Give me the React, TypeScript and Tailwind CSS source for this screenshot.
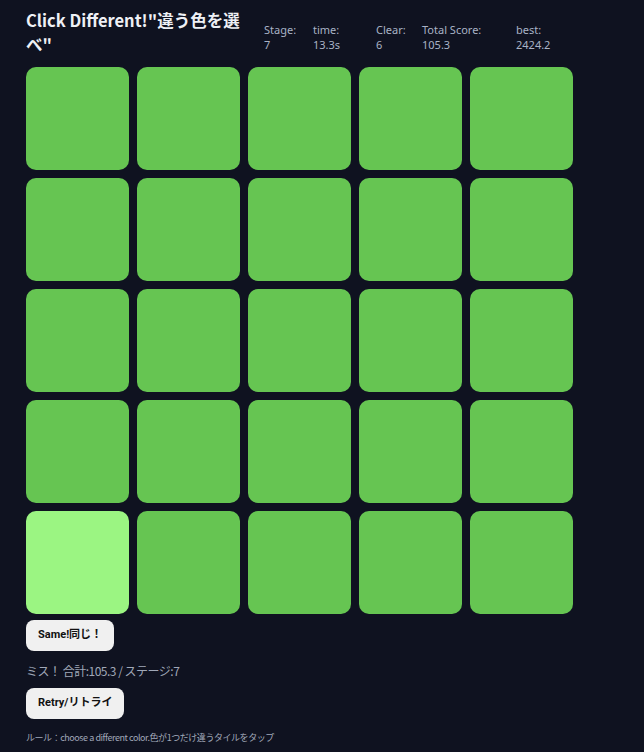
const stats = [
  { label: "Stage:", value: "7", w: "w-[49px]" },
  { label: "time:", value: "13.3s", w: "w-[63px]" },
  { label: "Clear:", value: "6", w: "w-[46px]" },
  { label: "Total Score:", value: "105.3", w: "w-[94px]" },
  { label: "best:", value: "2424.2", w: "w-[60px]" },
];

export default function App() {
  const tiles = Array.from({ length: 25 }, (_, i) => i);
  const odd = 20;

  return (
    <div className="min-h-[752px] bg-[#0f1220] px-[26px] pt-[8px] font-['Noto_Sans_CJK_JP',sans-serif]">
      <div className="flex items-start">
        <h1 className="w-[238px] text-[16.5px] font-bold leading-[24px] text-[#eef0f5]">
          Click Different!"違う色を選べ"
        </h1>
        <div className="mt-[14px] flex text-[11px] leading-[15px] text-[#a9b2c6] font-['Noto_Sans',sans-serif]">
          {stats.map((s) => (
            <div key={s.label} className={s.w}>
              <div>{s.label}</div>
              <div>{s.value}</div>
            </div>
          ))}
        </div>
      </div>

      <div className="mt-[11px] grid w-[547px] grid-cols-5 gap-[8px]">
        {tiles.map((i) => (
          <button
            key={i}
            className={
              "h-[103px] rounded-[10px] " +
              (i === odd ? "bg-[#9bf582]" : "bg-[#66c552]")
            }
          />
        ))}
      </div>

      <button className="mt-[6px] h-[31px] rounded-[8px] bg-[#f0f0f0] px-[12px] text-[11px] font-bold text-[#111] font-['Roboto','Noto_Sans_CJK_JP',sans-serif]">
        Same!同じ！
      </button>

      <p className="mt-[10px] text-[12px] leading-[20px] tracking-[-0.5px] text-[#a0a8b8]">
        ミス！ 合計:105.3 / ステージ:7
      </p>

      <button className="mt-[7px] h-[31px] rounded-[8px] bg-[#f0f0f0] px-[12px] text-[11px] font-bold text-[#111] font-['Roboto','Noto_Sans_CJK_JP',sans-serif]">
        Retry/リトライ
      </button>

      <p className="mt-[12px] text-[9px] leading-[14px] tracking-[-0.45px] text-[#a0a8b8]">
        ルール：choose a different color.色が1つだけ違うタイルをタップ
      </p>
    </div>
  );
}
